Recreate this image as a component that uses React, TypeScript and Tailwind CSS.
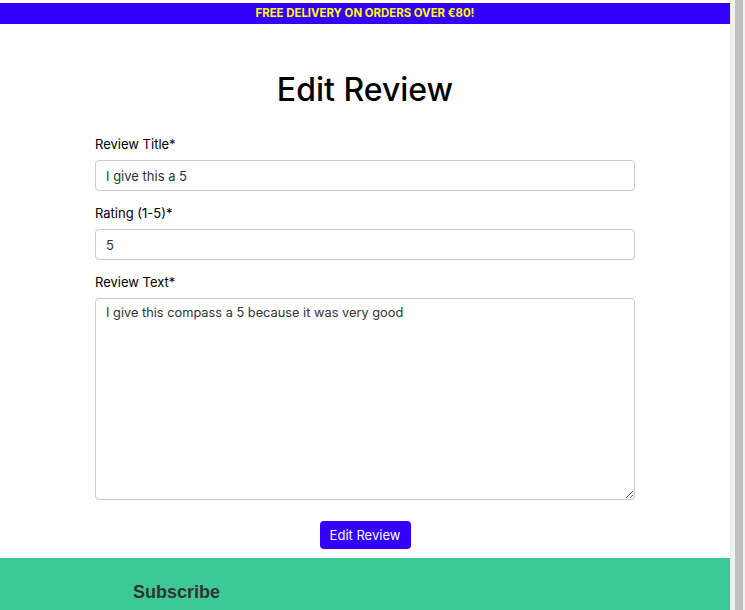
import React from 'react';

export default function App() {
  return (
    <div className="flex h-[610px] w-[745px] overflow-hidden bg-white" style={{ fontFamily: 'Inter, "Noto Sans", sans-serif' }}>
      <div className="flex w-[730px] flex-col pt-[3px]">
        <div className="flex h-[21px] items-center justify-center bg-[#3300ff] text-[11.4px] font-bold text-[#ffff00]">
          FREE DELIVERY ON ORDERS OVER €80!
        </div>

        <main className="flex flex-col items-center pt-[46px]">
          <h1 className="text-[32px] font-medium leading-[40px] text-black">Edit Review</h1>

          <form className="mt-[24px] flex w-[540px] flex-col text-[13px]" onSubmit={(e) => e.preventDefault()}>
            <label className="leading-[20px] text-black">Review Title*</label>
            <input
              defaultValue="I give this a 5"
              className="mt-[6px] h-[31px] rounded-[4px] border border-[#c5cbd3] px-[10px] text-[#333] outline-none"
            />

            <label className="mt-[12px] leading-[20px] text-black">Rating (1-5)*</label>
            <input
              defaultValue="5"
              className="mt-[6px] h-[31px] rounded-[4px] border border-[#c5cbd3] px-[10px] text-[#333] outline-none"
            />

            <label className="mt-[12px] leading-[20px] text-black">Review Text*</label>
            <textarea
              defaultValue="I give this compass a 5 because it was very good"
              className="mt-[6px] h-[202px] rounded-[4px] border border-[#c5cbd3] px-[10px] pt-[4px] leading-[20px] text-[12.8px] text-[#333] outline-none"
            />

            <div className="mt-[21px] flex justify-center">
              <button
                type="submit"
                className="h-[28px] w-[91px] rounded-[4px] bg-[#3300ff] pt-[2px] text-[13px] text-white"
              >
                Edit Review
              </button>
            </div>
          </form>
        </main>

        <footer className="mt-[9px] flex-1 bg-[#3cc997] pl-[133px] pt-[23px]">
          <h2
            className="text-[18px] font-bold leading-[22px] text-[#333]"
            style={{ fontFamily: '"Liberation Sans", Arial, sans-serif' }}
          >
            Subscribe
          </h2>
        </footer>
      </div>

      {/* scrollbar */}
      <div className="flex w-[15px] justify-center border-l border-[#e8e8e8] bg-[#f1f1f1]">
        <div className="ml-[2px] h-full w-[8px] bg-[#c1c1c1]" />
      </div>
    </div>
  );
}
